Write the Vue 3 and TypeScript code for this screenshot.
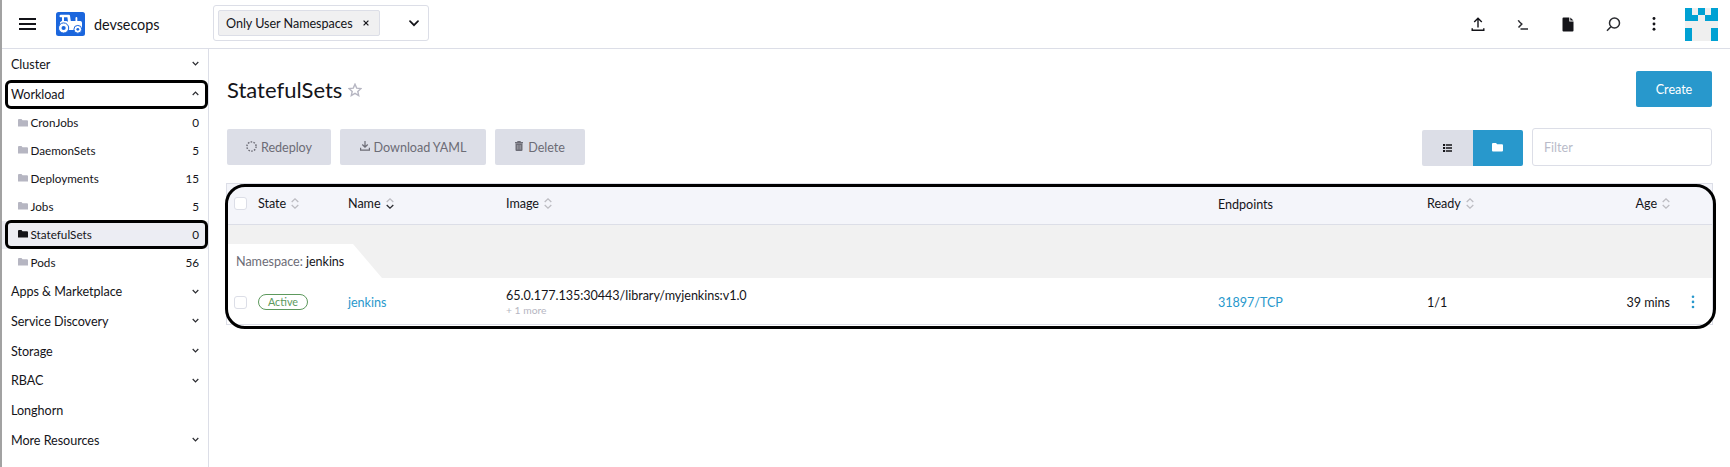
<script setup lang="ts">
interface NavChild { name: string; count: number; active?: boolean }
interface NavGroup { name: string; chevron?: 'up' | 'down'; children?: NavChild[] }

const groups: NavGroup[] = [
  { name: 'Cluster', chevron: 'down' },
  {
    name: 'Workload',
    chevron: 'up',
    children: [
      { name: 'CronJobs', count: 0 },
      { name: 'DaemonSets', count: 5 },
      { name: 'Deployments', count: 15 },
      { name: 'Jobs', count: 5 },
      { name: 'StatefulSets', count: 0, active: true },
      { name: 'Pods', count: 56 },
    ],
  },
  { name: 'Apps & Marketplace', chevron: 'down' },
  { name: 'Service Discovery', chevron: 'down' },
  { name: 'Storage', chevron: 'down' },
  { name: 'RBAC', chevron: 'down' },
  { name: 'Longhorn' },
  { name: 'More Resources', chevron: 'down' },
]

interface Column { label: string; cls: string; sort: 'none' | 'idle' | 'down' }
const columns: Column[] = [
  { label: 'State', cls: 'state', sort: 'idle' },
  { label: 'Name', cls: 'name', sort: 'down' },
  { label: 'Image', cls: 'image', sort: 'idle' },
  { label: 'Endpoints', cls: 'endpoints', sort: 'none' },
  { label: 'Ready', cls: 'ready', sort: 'idle' },
  { label: 'Age', cls: 'age', sort: 'idle' },
]

const avatarCells = '1010111011000001000110001'.split('').map((c) => c === '1')
</script>

<template>
  <div class="app">
    <header class="topbar">
      <svg class="burger" width="17" height="12" viewBox="0 0 17 12">
        <path d="M0 1h17M0 6h17M0 11h17" stroke="#141419" stroke-width="1.8" />
      </svg>
      <svg class="logo" width="29" height="24" viewBox="0 0 29 24">
        <rect width="29" height="24" rx="2.5" fill="#1b66dd" />
        <path
          d="M4.500 2.800H13q.9 0 1 .9l.8 5.300h4.700V6q0-.9.900-.9t.9.900v3h3q1.700 0 1.700 1.700v5q0 1.500-1.200 2.300H13L4 14v-3.700l2-1.600V5.300H4.500q-1 0-1-1.200t1-1.300z"
          fill="#fff"
        />
        <path d="M8 5.300h3.400l.6 4.400-1.600-.7-2.400.1z" fill="#1b66dd" />
        <circle cx="7.600" cy="16" r="5.100" fill="#fff" stroke="#1b66dd" stroke-width="1" />
        <circle cx="7.600" cy="16" r="2.100" fill="#1b66dd" />
        <path d="M12.700 20.300l.5-1.700h4.500l.4 1.700z" fill="#1b66dd" />
        <circle cx="21.800" cy="17.300" r="3.900" fill="#fff" stroke="#1b66dd" stroke-width="1" />
        <circle cx="21.800" cy="17.300" r="1.400" fill="#1b66dd" />
      </svg>
      <span class="cluster-name">devsecops</span>
      <div class="ns-select">
        <span class="ns-tag"><span class="ns-label">Only User Namespaces</span>
          <svg width="6" height="6" viewBox="0 0 6 6"><path d="M.6.6l4.800 4.800M5.400.6L.6 5.400" stroke="#141419" stroke-width="1.200" /></svg>
        </span>
        <svg class="ns-chevron" width="10" height="7" viewBox="0 0 10 7">
          <path d="M1 1.200l4 4 4-4" fill="none" stroke="#141419" stroke-width="1.700" stroke-linecap="round" />
        </svg>
      </div>
      <div class="actions">
        <svg width="14" height="16" viewBox="0 0 14 16" fill="none" stroke="#141419" stroke-width="1.400">
          <path d="M7 11.500V2.200M3.200 6l3.800-3.800L10.800 6M1.200 12.300v2h11.600v-2" />
        </svg>
        <svg width="14" height="16" viewBox="0 0 14 16" fill="none" stroke="#2a2b30" stroke-width="1.500">
          <path d="M2.300 4.300q.5 1.300 3.500 3.700L2.500 11.500M4.500 13.100H12" />
        </svg>
        <svg width="14" height="16" viewBox="0 0 14 16" fill="#141419">
          <path d="M2.500 1.500H8.300v3.900H12.500v9.100q0 1-1 1h-9q-1 0-1-1V2.500q0-1 1-1zM9.300 1.500l3.200 3H9.300z" />
        </svg>
        <svg width="15" height="16" viewBox="0 0 15 16" fill="none" stroke="#2a2b30" stroke-width="1.500">
          <circle cx="8.500" cy="7" r="5" /><path d="M4.900 10.700L1 14.700" />
        </svg>
        <svg class="kebab" width="14" height="16" viewBox="0 0 14 16" fill="#141419">
          <circle cx="7" cy="2.500" r="1.450" /><circle cx="7" cy="8" r="1.450" /><circle cx="7" cy="13.300" r="1.450" />
        </svg>
      </div>
      <div class="avatar">
        <i v-for="(on, i) in avatarCells" :key="i" :class="{ on }"></i>
      </div>
    </header>

    <div class="body">
      <nav class="sidebar">
        <template v-for="g in groups" :key="g.name">
          <div class="group" :class="{ open: g.children }">
            <span>{{ g.name }}</span>
            <svg v-if="g.chevron" width="7" height="5" viewBox="0 0 7 5">
              <path :d="g.chevron === 'up' ? 'M.7 4L3.500 1.200 6.300 4' : 'M.7 1L3.500 3.800 6.300 1'" fill="none" stroke="#2a2b30" stroke-width="1.200" />
            </svg>
          </div>
          <div v-if="g.children" class="children">
            <div v-for="c in g.children" :key="c.name" class="child" :class="{ active: c.active }">
              <svg width="10" height="8" viewBox="0 0 10 8"><path d="M0 1q0-1 1-1h2.500l1 1.200H9q1 0 1 1V7.500H0z" /></svg>
              <span class="label">{{ c.name }}</span>
              <span class="count">{{ c.count }}</span>
            </div>
          </div>
        </template>
      </nav>

      <main class="main">
        <div class="title-row">
          <h1>StatefulSets</h1>
          <svg class="star" width="14" height="14" viewBox="0 0 14 14">
            <path d="M7 1.200l1.700 3.900 4.300.4-3.200 2.900.9 4.200L7 10.400l-3.700 2.200.9-4.200L1 5.500l4.300-.4z" fill="none" stroke="#b6b6c2" stroke-width="1.400" />
          </svg>
          <button class="create"><span>Create</span></button>
        </div>

        <div class="toolbar">
          <button class="bulk redeploy">
            <svg width="11" height="11" viewBox="0 0 11 11">
              <circle cx="5.500" cy="5.500" r="4.600" fill="none" stroke="#6c6c76" stroke-width="1.400" stroke-dasharray="1.600 1.290" />
            </svg>
            <span>Redeploy</span>
          </button>
          <button class="bulk download">
            <svg width="10" height="10" viewBox="0 0 10 10">
              <path d="M5 0v6M2.300 3.500L5 6.200l2.700-2.700M.6 6.800v2.400h8.800V6.800" fill="none" stroke="#6c6c76" stroke-width="1.200" />
            </svg>
            <span>Download YAML</span>
          </button>
          <button class="bulk delete">
            <svg width="8" height="10" viewBox="0 0 8 10">
              <path d="M0 1h2.300V0h3.400v1H8v1.200H0z M.5 2.500h7V9q0 1-1 1h-5q-1 0-1-1z" fill="#6c6c76" />
              <path d="M2.400 4v4.500M4 4v4.500M5.600 4v4.500" stroke="#aeafb7" stroke-width=".6" />
            </svg>
            <span>Delete</span>
          </button>
          <div class="toggle">
            <span>
              <svg width="9" height="8" viewBox="0 0 9 8" fill="#141419">
                <path d="M0 0h2v2H0zM0 3h2v2H0zM0 6h2v2H0zM2.800 .2H9v1.600H2.800zM2.800 3.200H9v1.600H2.800zM2.800 6.200H9v1.600H2.800z" />
              </svg>
            </span>
            <span class="on">
              <svg width="11" height="9" viewBox="0 0 11 9"><path d="M0 1q0-1 1-1h3l1.200 1.300H10q1 0 1 1V7.500q0 1-1 1H1q-1 0-1-1z" fill="#fff" /></svg>
            </span>
          </div>
          <input class="filter" placeholder="Filter" />
        </div>

        <section class="table">
          <div class="row head">
            <i class="check"></i>
            <div v-for="c in columns" :key="c.label" :class="c.cls">
              <span>{{ c.label }}</span>
              <svg v-if="c.sort !== 'none'" width="8" height="11" viewBox="0 0 8 11" fill="none" stroke-width="1.300">
                <path d="M.7 4L4 .9 7.300 4" stroke="#bcbcc2" />
                <path d="M.7 7L4 10.100 7.300 7" :stroke="c.sort === 'down' ? '#2a2b30' : '#bcbcc2'" />
              </svg>
            </div>
          </div>
          <div class="group-row">
            <div class="group-tab">Namespace: <b>jenkins</b></div>
          </div>
          <div class="row data">
            <i class="check"></i>
            <div class="state"><span class="badge">Active</span></div>
            <div class="name link">jenkins</div>
            <div class="image">
              <div class="img-name">65.0.177.135:30443/library/myjenkins:v1.0</div>
              <div class="more">+ 1 more</div>
            </div>
            <div class="endpoints link">31897/TCP</div>
            <div class="ready">1/1</div>
            <div class="age">39 mins</div>
            <svg class="menu" width="4" height="14" viewBox="0 0 4 14" fill="#2898cc">
              <circle cx="2" cy="1.800" r="1.300" /><circle cx="2" cy="6.900" r="1.300" /><circle cx="2" cy="12" r="1.300" />
            </svg>
          </div>
          <div class="outline"></div>
        </section>
      </main>
    </div>
  </div>
</template>

<style>
body { margin: 0; background: #fff; overflow: hidden; }
</style>

<style scoped>
* { box-sizing: border-box; }
.app {
  height: 467px;
  border-left: 2px solid #a2a2a2;
  font: 12.600px/16px Lato, sans-serif;
  letter-spacing: -.04px;
  color: #141419;
  display: flex;
  flex-direction: column;
}
svg { display: block; flex: none; }
button { font: inherit; letter-spacing: inherit; border: 0; margin: 0; }
.topbar { height: 49px; flex: none; border-bottom: 1px solid #dcdee7; display: flex; align-items: center; padding: 0 12px 0 17px; }
.logo { margin-left: 20px; }
.cluster-name { font-size: 14.400px; margin-left: 9px; width: 119px; padding-top: 1px; }
.ns-select { width: 216px; height: 36px; margin-top: -2px; border: 1px solid #dcdee7; border-radius: 3px; display: flex; align-items: center; padding: 0 9px 0 4px; justify-content: space-between; }
.ns-tag { width: 162px; height: 26px; background: #f0f0f1; border: 1px solid #dcdee7; border-radius: 2px; display: flex; align-items: center; justify-content: space-between; padding: 0 10px 0 7px; white-space: nowrap; }
.ns-label, .group > span, .create > span, .bulk > span { padding-top: 2px; }
.actions { display: flex; gap: 31px; margin-left: auto; margin-right: 24px; }
.kebab { margin-left: -5px; }
.avatar { width: 33px; height: 33px; margin-top: 1px; background: #efefef; display: grid; grid-template-columns: repeat(5, 1fr); grid-template-rows: repeat(5, 1fr); }
.avatar .on { background: #00a1d3; }

.body { flex: 1; display: flex; min-height: 0; }
.sidebar { width: 207px; flex: none; border-right: 1px solid #dcdee7; }
.group { position: relative; height: 29.700px; display: flex; align-items: center; justify-content: space-between; padding: 0 9px; }
.group.open::after, .child.active::after { content: ''; position: absolute; inset: -1px 0 0 3px; border: 3px solid #000; border-radius: 6px; }
.group.open::after { top: 1px; bottom: -1px; right: 0; }
.children { padding-top: .7px; }
.child { position: relative; height: 27.900px; display: flex; align-items: center; padding: 0 9px 0 16px; }
.child svg { fill: #b6b6c2; margin-top: -1px; }
.child .label, .child .count { font-size: 11.700px; letter-spacing: 0; padding-bottom: 1.500px; }
.child .label { margin-left: 2.500px; }
.child .count { margin-left: auto; }
.child.active { background: #ecedf3; }
.child.active svg { fill: #141419; }

.main { flex: 1; min-width: 0; padding: 22px 18px 0 18px; }
.title-row { display: flex; align-items: center; height: 36px; }
h1 { font-size: 22px; line-height: 28px; letter-spacing: 0; font-weight: 400; margin: 2px 0 0; }
.star { margin: 1px 0 0 6px; }
.create { margin-left: auto; width: 76px; height: 36px; background: #2898cc; color: #fff; border-radius: 2px; padding: 0; display: flex; align-items: center; justify-content: center; }
.toolbar { display: flex; margin-top: 21px; height: 38px; align-items: flex-end; }
.bulk { height: 36px; background: #dcdee7; color: #6c6c76; border-radius: 2px; display: flex; align-items: center; justify-content: center; gap: 4px; padding: 0; margin-right: 9px; margin-bottom: 1px; white-space: nowrap; }
.bulk svg { margin-top: -2px; }
.redeploy { width: 104px; }
.download { width: 146px; }
.delete { width: 90px; gap: 5px; }
.toggle { display: flex; margin-left: auto; margin-right: 9px; }
.toggle span { width: 50.500px; height: 36px; background: #dcdee7; border-radius: 2px 0 0 2px; display: flex; align-items: center; justify-content: center; padding-bottom: 1px; }
.toggle .on { background: #2898cc; border-radius: 0 2px 2px 0; }
.filter { width: 180px; height: 38px; border: 1px solid #dcdee7; border-radius: 3px; padding: 1px 11px 0; font: inherit; outline: 0; }
.filter::placeholder { color: #b9bbc9; opacity: 1; }

.table { position: relative; margin: 17px -1px 0; border: 1px solid #dcdee7; height: 142px; }
.row { display: grid; grid-template-columns: 31px 90px 158px 712px 209px 143px 100px 1fr; align-items: center; }
.head { height: 41px; background: #f4f5fa; border-bottom: 1px solid #dcdee7; padding-bottom: 2px; }
.head > div { display: flex; align-items: center; gap: 5px; }
.head > div > span { padding-top: 2px; }
.check { width: 13px; height: 13px; border: 1px solid #dcdee7; border-radius: 3px; background: #fff; margin-left: 7px; }
.row .age { justify-content: flex-end; text-align: right; }
.head .endpoints { padding-top: 1px; }
.data .name, .data .endpoints, .data .ready, .data .age { padding-top: 1px; }
.group-row { height: 53px; background: #f1f1f1; padding-top: 19px; }
.group-tab { width: 155px; height: 34px; background: #fff; clip-path: polygon(0 0, 126px 0, 100% 100%, 0 100%); padding: 10px 0 0 9px; color: #6c6c76; white-space: nowrap; }
.group-tab b { font-weight: 400; color: #141419; }
.data { height: 48px; }
.link { color: #2898cc; }
.badge { display: flex; height: 16px; width: 50px; border: 1px solid #5d995d; color: #5d995d; border-radius: 9px; align-items: center; justify-content: center; font-size: 10.800px; line-height: 14px; letter-spacing: 0; }
.img-name { line-height: 15px; }
.more { font-size: 10.300px; line-height: 14px; color: #b6b6c2; letter-spacing: 0; }
.menu { margin-left: 21px; }
.outline { position: absolute; left: -2px; top: 0; right: -4px; bottom: -5px; border: 3px solid #000; border-radius: 20px; }
</style>
